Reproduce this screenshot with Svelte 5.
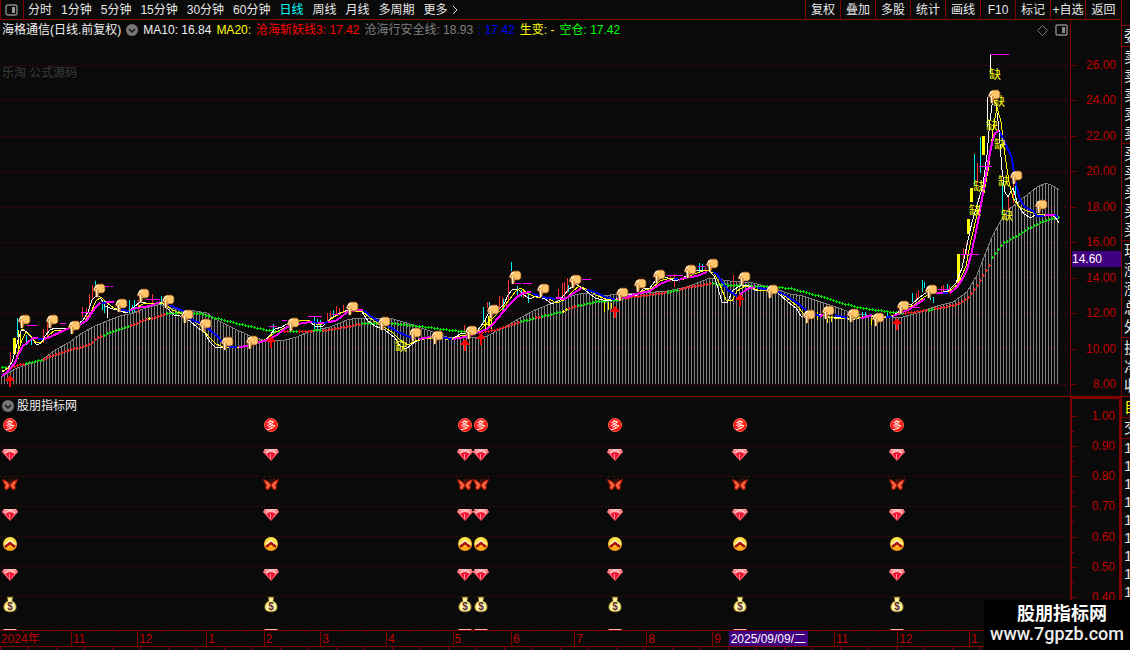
<script lang="ts">
	type Pt = [number, number];

	let period = $state('日线');

	const periods = ['分时', '1分钟', '5分钟', '15分钟', '30分钟', '60分钟', '日线', '周线', '月线', '多周期'];
	const tools = ['复权', '叠加', '多股', '统计', '画线', 'F10', '标记', '+自选', '返回'];

	const legend = [
		{ text: 'MA10: 16.84', cls: 'white' },
		{ text: 'MA20:', cls: 'yellow' },
		{ text: '沧海斩妖线3: 17.42', cls: 'red' },
		{ text: '沧海行安全线: 18.93', cls: 'gray' },
		{ text: ': 17.42', cls: 'blue' },
		{ text: '生变: -', cls: 'yellow' },
		{ text: '空仓: 17.42', cls: 'green' }
	];

	const prices = ['26.00', '24.00', '22.00', '20.00', '18.00', '16.00', '14.00', '12.00', '10.00', '8.00'];
	const levels = ['1.00', '0.90', '0.80', '0.70', '0.60', '0.50', '0.40'];

	const months = [
		{ name: '2024年', span: 72 },
		{ name: '11', span: 66 },
		{ name: '12', span: 69 },
		{ name: '1', span: 57 },
		{ name: '2', span: 56 },
		{ name: '3', span: 66 },
		{ name: '4', span: 66 },
		{ name: '5', span: 58 },
		{ name: '6', span: 63 },
		{ name: '7', span: 72 },
		{ name: '8', span: 66 },
		{ name: '9', span: 59 },
		{ name: '', span: 62 },
		{ name: '11', span: 63 },
		{ name: '12', span: 72 },
		{ name: '1', span: 154 }
	];

	const sideGroups = [
		{ rows: ['委'] },
		{ rows: ['卖', '卖', '卖', '卖', '卖'] },
		{ rows: ['买', '买', '买', '买', '买'] },
		{ rows: ['现', '涨', '涨', '总', '外'] },
		{ rows: ['换', '净', '收'] },
		{ rows: ['自'], cls: 'yellow' },
		{ rows: ['交'] },
		{ rows: ['1', '1', '1', '1', '1', '1', '1', '1', '1'], cls: 'ticks' }
	];

	function parse(s: string): Pt[] {
		return s.split(' ').map((p) => p.split(',').map(Number) as Pt);
	}

	function valueAt(pts: Pt[], x: number) {
		for (let i = 1; i < pts.length; i++) {
			if (x <= pts[i][0]) {
				const [x0, y0] = pts[i - 1];
				const [x1, y1] = pts[i];
				return y0 + ((y1 - y0) * (x - x0)) / (x1 - x0);
			}
		}
		return pts[pts.length - 1][1];
	}

	const safety = parse('1,377 15,369 25,365 42,360 55,350 70,342 82,333 95,326 107,321 120,316 133,313 143,309 160,304 167,307 180,310 195,311 207,313 217,320 233,328 250,336 263,340 285,340 297,337 310,331 330,327 347,320 357,318 370,318 393,319 410,324 427,330 447,337 473,338 487,336 503,328 520,318 533,311 550,304 567,297 583,293 603,296 617,294 643,293 667,291 687,287 710,278 730,281 753,283 773,288 790,294 803,296 830,305 853,313 880,317 903,317 917,313 937,306 953,302 967,292 977,275 984,257 992,237 1000,222 1008,210 1017,203 1027,195 1037,187 1046,183 1053,186 1059,190');

	const bars: { x: number; y: number }[] = [];
	for (let x = 1; x < 1060; x += 3) {
		bars.push({ x, y: Math.round(valueAt(safety, x)) });
	}

	const cross = parse('2,367 10,367 17,365 25,363 40,360 67,350 87,345 100,336 130,325 147,319 167,313 185,312 200,313 213,317 240,324 267,330 278,331 300,331 323,330 337,328 363,323 393,323 427,327 460,331 480,332 493,330 517,322 533,318 542,316 562,311 575,306 597,301 617,300 628,297 667,292 687,287 710,283 733,285 767,286 790,288 820,296 853,306 877,310 903,313 910,312 927,310 957,304 967,298 977,285 983,275 988,267 993,255 1003,243 1017,235 1030,227 1043,221 1053,218 1060,217');
	const redRuns = [[8, 24], [42, 102], [131, 146], [152, 166], [279, 289], [297, 313], [322, 361], [479, 519], [534, 541], [568, 575], [624, 665], [680, 711], [905, 927], [934, 990]];
	const yellowRuns = [[72, 75], [147, 152], [562, 568]];

	function crossColor(x: number) {
		if (redRuns.some(([a, b]) => x >= a && x <= b)) return '#ff1c1c';
		if (yellowRuns.some(([a, b]) => x >= a && x <= b)) return '#ffff00';
		return '#00e000';
	}

	const crosses: { x: number; y: number; color: string }[] = [];
	for (let x = 2; x <= 1060; x += 3) {
		crosses.push({ x, y: Math.round(valueAt(cross, x)), color: crossColor(x) });
	}

	const rising = [
		'2,376 8,371 15,363 18,355 23,346 28,342 33,338 38,338',
		'44,339 50,337 67,329 80,325 87,320 95,308 100,303',
		'106,302 114,302',
		'130,310 137,308 150,306 160,302',
		'239,347 247,346 260,342 267,340 277,335 287,327 295,325 303,323 312,322',
		'318,323 324,323',
		'328,322 335,321 340,318 347,312 357,310 363,310',
		'419,339 430,337',
		'453,339 465,337 477,333 487,329 493,324 503,312 510,304 517,297 523,293 531,292',
		'556,298 565,299 572,294 582,288',
		'617,299 627,297 640,293 650,291 660,284 670,280',
		'679,280 684,278 697,276 707,272',
		'740,295 747,289 755,287',
		'820,316 823,315',
		'861,318 866,317 872,315',
		'893,316 898,314 910,309 917,304 925,299',
		'934,293 943,293',
		'950,293 957,287 963,278 967,270 971,255 977,227 983,193 988,163 992,143 995,133 999,131',
		'1045,215 1055,215'
	];
	const falling = [
		'38,339 43,339',
		'102,303 106,303',
		'121,310 129,311',
		'169,305 174,307 183,311 192,320 200,323 210,330 218,337 222,342 230,347 237,347',
		'312,322 318,323',
		'324,323 328,322',
		'364,311 373,318 390,327 398,332 407,336 415,339',
		'443,338 452,339',
		'533,294 537,295 542,297 555,299',
		'587,290 597,293 607,298 615,299',
		'674,279 678,279',
		'713,272 717,274 722,282 728,290 737,296',
		'758,288 765,289 777,291 787,296 800,305 808,312 820,316',
		'835,315 847,318',
		'886,317 892,317',
		'943,293 948,293',
		'1000,132 1005,143 1012,158 1015,180 1020,200 1025,207 1033,211 1037,216 1044,216',
		'1055,215 1058,218'
	];

	const ma10 = '2,372 8,368 12,362 15,352 18,340 21,331 24,330 28,333 33,340 37,345 41,343 45,336 50,330 55,328 62,329 70,328 78,324 83,320 88,312 92,300 96,296 100,297 105,306 110,308 120,311 126,313 133,308 140,302 146,303 155,304 162,302 168,309 174,315 180,316 190,321 198,328 205,333 210,342 215,347 222,347 235,348 244,346 255,343 265,341 270,335 275,329 282,327 292,321 300,320 308,320 315,326 322,327 330,319 338,314 345,311 355,310 362,312 368,321 375,326 385,330 395,338 400,346 406,349 412,344 420,339 430,338 440,337 448,340 455,337 462,333 470,335 478,330 484,322 490,310 496,312 504,304 508,295 512,290 518,289 524,295 530,299 536,296 545,299 552,304 560,300 568,290 576,284 585,290 595,298 603,300 612,300 620,298 630,294 636,296 643,289 650,288 655,281 665,277 675,281 683,278 692,272 700,270 708,270 714,276 718,288 722,302 727,303 733,290 740,286 748,285 756,291 768,290 778,293 788,302 796,308 801,316 808,318 818,314 830,318 840,317 852,320 862,317 872,315 882,318 892,317 898,312 904,307 912,304 920,297 930,290 938,293 948,291 956,283 962,268 967,245 972,222 978,202 983,185 987,155 990,120 993,98 996,104 999,130 1002,170 1005,192 1008,197 1013,188 1018,205 1024,214 1031,218 1036,214 1042,216 1050,214 1055,217 1059,223';
	const ma20 = '2,371 10,368 15,362 18,352 22,340 26,332 31,336 36,343 42,342 48,336 55,330 66,330 76,327 85,321 91,312 96,301 101,297 107,303 114,308 126,312 136,308 145,303 158,303 164,303 172,310 180,313 190,319 200,325 208,336 216,344 226,348 242,347 256,343 267,339 274,333 282,329 292,324 302,320 310,321 318,325 326,323 334,317 343,312 352,311 362,311 370,318 380,325 392,332 400,340 408,345 415,341 424,339 440,338 450,340 460,336 472,334 480,330 486,324 494,317 502,309 509,300 516,291 521,288 528,294 536,297 546,297 556,303 564,300 572,292 579,286 588,290 598,296 608,300 620,299 632,296 642,291 652,288 660,281 670,278 682,280 694,274 706,270 714,273 720,285 726,300 732,301 737,291 745,286 758,290 770,290 780,293 790,300 798,307 806,317 820,315 834,318 846,319 858,318 872,316 886,317 896,315 904,309 914,305 924,297 934,292 948,292 958,284 966,266 971,240 977,215 984,193 989,165 993,130 997,107 1001,122 1005,155 1009,182 1013,198 1019,207 1027,211 1036,214 1046,214 1058,217';

	const redWicks = [[10, 352, 363], [43, 329, 343], [47, 322, 336], [82, 307, 317], [86, 308, 318], [89, 294, 310], [92, 285, 300], [138, 300, 313], [152, 294, 305], [288, 320, 328], [327, 313, 323], [330, 311, 320], [336, 306, 315], [339, 308, 315], [343, 305, 313], [464, 325, 331], [487, 302, 308], [499, 296, 310], [502, 297, 313], [506, 303, 310], [508, 280, 302], [523, 290, 298], [549, 297, 303], [558, 289, 298], [562, 283, 298], [564, 282, 297], [567, 278, 293], [670, 275, 282], [674, 274, 287], [705, 267, 273], [733, 275, 285], [916, 293, 300], [918, 290, 298], [941, 286, 292], [943, 285, 293], [949, 286, 293], [957, 275, 285], [963, 248, 260], [966, 243, 255], [977, 163, 183], [1008, 197, 210], [1013, 183, 203]];
	const cyanWicks = [[17, 318, 337], [26, 335, 345], [31, 338, 345], [95, 281, 285], [102, 300, 310], [104, 300, 313], [129, 300, 313], [132, 305, 313], [134, 300, 312], [161, 296, 305], [273, 324, 333], [314, 317, 330], [317, 319, 332], [320, 320, 330], [333, 310, 318], [483, 307, 322], [489, 302, 310], [503, 299, 312], [511, 262, 271], [517, 286, 297], [521, 290, 297], [528, 293, 303], [568, 285, 292], [699, 263, 272], [702, 264, 270], [862, 312, 317], [865, 312, 317], [887, 312, 317], [912, 293, 302], [922, 280, 292], [924, 282, 288], [930, 293, 300], [933, 297, 303], [947, 284, 293], [974, 154, 185], [980, 137, 173], [1002, 183, 215], [1015, 183, 200]];
	const whiteWicks = [[107, 305, 318], [990, 54, 73], [987, 97, 127]];
	// limit-up candles and the choppy stretches, drawn solid
	const blocks = [[13, 338, 3, 16], [18, 330, 1, 20], [21, 329, 3, 1], [20, 334, 1, 12], [16, 358, 3, 1], [485, 318, 1, 12], [488, 316, 2, 10], [491, 317, 1, 14], [481, 324, 12, 1], [604, 302, 1, 10], [608, 302, 1, 8], [611, 303, 1, 6], [817, 312, 1, 8], [827, 317, 1, 6], [831, 316, 1, 6], [871, 318, 1, 7], [957, 254, 3, 28], [967, 219, 3, 15], [970, 188, 3, 14], [982, 136, 3, 19]];
	const marks = [[27, 37, 325], [60, 66, 323], [105, 109, 286], [111, 113, 286], [81, 92, 312], [146, 160, 299], [269, 277, 326], [282, 287, 320], [308, 322, 316], [332, 340, 314], [515, 521, 283], [523, 532, 283], [582, 591, 279], [667, 683, 275], [698, 705, 266], [910, 920, 307], [938, 950, 289], [961, 979, 254], [979, 992, 166], [990, 1009, 54]];

	const hands = parse('24,321 52,321 74,327 99,290 121,305 143,295 168,301 187,316 205,325 227,343 252,342 293,324 352,308 384,323 415,334 437,337 471,332 493,311 515,277 543,290 575,281 622,294 640,285 659,276 690,271 712,265 744,278 772,291 809,316 828,312 853,315 878,319 903,307 931,291 994,96 1016,177 1041,206');
	const arrows = parse('10,375 271,336 465,339 481,333 615,306 740,294 897,318');
	const gaps = parse('401,351 995,79 999,106 992,130 1000,149 979,191 975,215 1004,186 1007,220');

	const signals = [10, 271, 465, 481, 615, 740, 897];
	const stack = [
		{ icon: 'duo', y: 28 },
		{ icon: 'gem', y: 57 },
		{ icon: 'butterfly', y: 87 },
		{ icon: 'gem', y: 117 },
		{ icon: 'up', y: 147 },
		{ icon: 'gem', y: 177 },
		{ icon: 'bag', y: 208 },
		{ icon: 'gem', y: 237 }
	];

	function wicks(list: number[][]) {
		return list.map(([x, a, b]) => `M${x + 0.5} ${a}V${b}`).join('');
	}
</script>

<div class="terminal">
	<div class="main">
		<nav class="toolbar">
			<button class="layout-btn" aria-label="布局">
				<svg width="13" height="12" viewBox="0 0 13 12">
					<rect x="1" y="1" width="11" height="10" rx="2" fill="none" stroke="#888" stroke-width="1.4" />
					<rect x="7" y="3" width="3" height="6" fill="#999" />
				</svg>
			</button>
			<div class="periods">
				{#each periods as p}
					<button class:active={p === period} onclick={() => (period = p)}>{p}</button>
				{/each}
				<button class="more">更多
					<svg width="6" height="10" viewBox="0 0 6 10"><path d="M1 1L5 5L1 9" fill="none" stroke="#ddd" /></svg>
				</button>
			</div>
			<div class="tools">
				{#each tools as t}
					<button>{t}</button>
				{/each}
			</div>
		</nav>

		<section class="panel price">
			<div class="plot">
				<svg class="chart" viewBox="0 20 1070 376">
					<defs>
						<g id="hand">
							<path d="M-6 1L-4-4L-1-6H4L6-4V1L4 3H0L-1 7H-3L-4 1Z" fill="#ffc66c" stroke="#7a3c12" stroke-width=".8" stroke-linejoin="round" />
							<path d="M-5 0L-3-4L-1-5M-2.500 0V7" fill="none" stroke="#fff0d4" stroke-width="1.300" />
							<path d="M-4 0L-3-2M-1 0V5" fill="none" stroke="#a8581c" stroke-width=".8" />
						</g>
					</defs>

					{#each prices as _, i}
						<line class="grid" x1="1" x2="1067" y1={Math.round(65 + i * 35.4) + 0.5} y2={Math.round(65 + i * 35.4) + 0.5} />
					{/each}

					<path class="thin" stroke="#808080" d={bars.map((b) => `M${b.x + 0.5} ${b.y}V384`).join('')} />
					<polyline class="thin" stroke="#808080" points={safety.join(' ')} />

					<path class="thin" stroke="#ff3232" d={wicks(redWicks)} />
					<path class="thin" stroke="#00f0f0" d={wicks(cyanWicks)} />
					<path class="thin" stroke="#fff" d={wicks(whiteWicks)} />
					{#each blocks as [x, y, w, h]}
						<rect {x} {y} width={w} height={h} fill="#ffff00" />
					{/each}

					{#each crosses as c}
						<path class="thin" stroke={c.color} d="M{c.x - 1} {c.y + 0.5}h3M{c.x + 0.5} {c.y - 1}v3" />
					{/each}

					<polyline class="thin" stroke="#fff" points={ma10} />
					<polyline class="thin" stroke="#ffff00" points={ma20} />
					{#each rising as points}
						<polyline class="thick" stroke="#ff00ff" {points} />
					{/each}
					{#each falling as points}
						<polyline class="thick" stroke="#0000ff" {points} />
					{/each}
					{#each marks as [a, b, y]}
						<line class="thin" stroke="#ff00ff" x1={a} x2={b} y1={y + 0.5} y2={y + 0.5} />
					{/each}

					{#each gaps as [x, y]}
						<text class="gap" {x} {y}>缺</text>
					{/each}
					{#each arrows as [x, y]}
						<path d="M{x} {y}l5 6h-4v6h-2v-6h-4z" fill="#ff0000" />
					{/each}
					{#each hands as [x, y]}
						<use href="#hand" {x} {y} />
					{/each}
				</svg>

				<div class="legend">
					<span class="white">海格通信(日线.前复权)</span>
					<button class="fold" aria-label="展开指标">
						<svg width="12" height="12" viewBox="0 0 12 12"><circle cx="6" cy="6" r="6" fill="#777" /><path d="M3 5L6 8L9 5" fill="none" stroke="#111" stroke-width="1.4" /></svg>
					</button>
					{#each legend as l}
						<span class={l.cls}>{l.text}</span>
					{/each}
					<span class="corner">
						<svg width="11" height="11" viewBox="0 0 11 11"><path d="M5.5 .5L10.500 5.500L5.500 10.500L.5 5.500Z" fill="none" stroke="#777" /></svg>
						<svg width="13" height="12" viewBox="0 0 13 12">
							<rect x="1" y="1" width="11" height="10" rx="1" fill="none" stroke="#888" stroke-width="1.4" />
							<rect x="7" y="3" width="3" height="6" fill="#888" />
						</svg>
					</span>
				</div>
				<p class="source">乐淘 公式源码</p>
			</div>
			<ul class="axis">
				{#each prices as p}
					<li>{p}</li>
				{/each}
			</ul>
			<span class="price-tag">14.60</span>
		</section>

		<section class="panel signal">
			<div class="plot">
				<svg class="chart" viewBox="0 0 1070 233">
					<defs>
						<radialGradient id="redball" cx=".5" cy=".4">
							<stop offset=".5" stop-color="#ff2a20" />
							<stop offset="1" stop-color="#ff0000" />
						</radialGradient>
						<linearGradient id="gold" x2="0" y2="1">
							<stop offset="0" stop-color="#fff04a" />
							<stop offset="1" stop-color="#ff9a10" />
						</linearGradient>
						<g id="duo">
							<circle r="6.500" fill="url(#redball)" stroke="#ff6a5a" />
						</g>
						<g id="gem">
							<path d="M-8-2L-6-5H6L8-2L0 7Z" fill="#ff5a68" />
							<path d="M-8-2L-6-5H6L8-2L4 0C2-2-2-2-4 0Z" fill="#ff8088" />
							<path d="M-6-4.500H6" stroke="#ffb8b0" fill="none" />
							<path d="M-5-1C-3-4 3-4 5-1" stroke="#fff0e8" fill="none" />
							<path d="M-4 0C-2-2 2-2 4 0L0 6Z" fill="#f01434" />
							<path d="M-.5 0V5" stroke="#ffb0b0" stroke-width=".8" />
						</g>
						<g id="butterfly">
							<path d="M0 1C-1-2-4-4-8-5C-7-3-7-1-5 1C-6 3-6 5-4 6C-2 6-1 4 0 2C1 4 2 6 4 6C6 5 6 3 5 1C7-1 7-3 8-5C4-4 1-2 0 1Z" fill="#e03818" stroke="#6a0c04" stroke-width=".8" />
							<path d="M-5-2L-2 1L-4 4M5-2L2 1L4 4" fill="none" stroke="#ff7450" stroke-width="1.500" />
							<path d="M0 0L-1-5M0 0L3-6" stroke="#a01a10" stroke-width=".7" />
						</g>
						<g id="up">
							<circle r="7" fill="url(#gold)" />
							<path d="M-5 1L0-3L5 1" fill="none" stroke="#fff6b0" stroke-width="3" />
							<path d="M-5 3L0-1L5 3" fill="none" stroke="#a80c0c" stroke-width="2.400" />
						</g>
						<g id="bag">
							<path d="M-3-8H3L2-4C5-3 7 0 6 4C5 8-5 8-6 4C-7 0-5-3-2-4Z" fill="#f5ee6a" stroke="#6e4a2a" stroke-width=".8" />
							<ellipse cy="2" rx="4.500" ry="4" fill="#fff9c4" />
							<path d="M-2-5H2" stroke="#fff" />
						</g>
					</defs>

					{#each levels.slice(1) as _, i}
						<line class="grid" x1="1" x2="1067" y1={49.5 + i * 30} y2={49.5 + i * 30} />
					{/each}
					{#each signals as x}
						{#each stack as s}
							<use href="#{s.icon}" {x} y={s.y} />
							{#if s.icon === 'duo'}
								<text class="duo" {x} y={s.y + 4}>多</text>
							{:else if s.icon === 'bag'}
								<text class="dollar" {x} y={s.y + 5}>$</text>
							{/if}
						{/each}
					{/each}
				</svg>
				<div class="legend">
					<button class="fold" aria-label="展开副图">
						<svg width="12" height="12" viewBox="0 0 12 12"><circle cx="6" cy="6" r="6" fill="#777" /><path d="M3 5L6 8L9 5" fill="none" stroke="#111" stroke-width="1.4" /></svg>
					</button>
					<span class="white">股朋指标网</span>
				</div>
			</div>
			<ul class="axis">
				{#each levels as l}
					<li>{l}</li>
				{/each}
			</ul>
		</section>

		<div class="timeline">
			{#each months as m}
				<span style:flex-grow={m.span}>{m.name}</span>
			{/each}
			<time class="cursor" datetime="2025-09-09">2025/09/09/二</time>
		</div>
		<div class="status"></div>
	</div>

	<aside class="quotes">
		{#each sideGroups as g}
			<div class="group {g.cls ?? ''}">
				{#each g.rows as r}
					<span>{r}</span>
				{/each}
			</div>
		{/each}
	</aside>

	<footer class="brand">
		<strong>股朋指标网</strong>
		<a href="http://www.7gpzb.com">www.7gpzb.com</a>
	</footer>
</div>

<style>
	:global(body) {
		background: #0a0a0a;
	}

	.terminal {
		position: relative;
		display: flex;
		height: 100vh;
		overflow: hidden;
		background: #0a0a0a;
		color: #e8e8e8;
		font: 12px/16px 'Liberation Sans', 'Noto Sans CJK SC', sans-serif;
	}

	.main {
		flex: 1;
		min-width: 0;
		display: flex;
		flex-direction: column;
	}

	button {
		padding: 0;
		border: 0;
		background: none;
		color: inherit;
		font: inherit;
		white-space: nowrap;
		cursor: pointer;
	}

	svg {
		display: block;
	}

	.toolbar {
		display: flex;
		height: 19px;
		border-bottom: 1px solid #800000;
	}

	.layout-btn {
		width: 24px;
		box-sizing: border-box;
		padding-left: 4px;
		border-left: 1px solid #800000;
		border-right: 1px solid #800000;
	}

	.periods {
		flex: 1;
		display: flex;
		gap: 9px;
		padding-left: 4px;
	}

	.periods .active {
		color: #00ffff;
	}

	.more {
		display: flex;
		align-items: center;
		gap: 4px;
	}

	.tools {
		display: flex;
	}

	.tools button {
		width: 35px;
		border-left: 1px solid #800000;
		box-sizing: border-box;
	}

	.tools button:last-child {
		width: 36px;
	}

	.panel {
		position: relative;
		display: flex;
	}

	.plot {
		position: relative;
		flex: 1;
		min-width: 0;
	}

	.chart {
		width: 100%;
		height: auto;
	}

	.price {
		border-bottom: 1px solid #800000;
	}

	.legend {
		position: absolute;
		top: 2px;
		left: 2px;
		right: 2px;
		display: flex;
		align-items: center;
		gap: 5px;
		white-space: pre;
	}

	.signal .legend {
		top: 1px;
		gap: 3px;
	}

	.corner {
		display: flex;
		align-items: center;
		gap: 7px;
		margin-left: auto;
	}

	.source {
		position: absolute;
		top: 45px;
		left: 2px;
		margin: 0;
		color: #3c3c3c;
	}

	.white { color: #f0f0f0; }
	.yellow { color: #ffff00; }
	.red { color: #ff0000; }
	.gray { color: #808080; }
	.blue { color: #0000ff; }
	.green { color: #00ff00; }

	.axis {
		width: 51px;
		box-sizing: border-box;
		display: flex;
		flex-direction: column;
		justify-content: space-between;
		margin: 0;
		padding: 37px 0 4px;
		border-left: 1px solid #800000;
		list-style: none;
		color: #c00000;
	}

	.axis li {
		position: relative;
		padding-right: 5px;
		text-align: right;
	}

	.axis li::before,
	.axis li::after {
		content: '';
		position: absolute;
		left: 0;
		top: 8px;
		width: 5px;
		height: 1px;
		background: #800000;
	}

	.axis li::after {
		top: 26px;
		width: 2px;
	}

	.axis li:last-child::after {
		display: none;
	}

	.signal .axis {
		padding: 9px 0 25px;
		border: 2px solid #800000;
		border-bottom: 0;
	}

	.signal .axis li {
		padding-right: 4px;
	}

	.signal .axis li::after {
		top: 23px;
	}

	.price-tag {
		position: absolute;
		right: 0;
		bottom: 129px;
		width: 49px;
		background: #400080;
		color: #fff;
	}

	.grid {
		stroke: #6a0c0c;
		stroke-dasharray: 1 3;
		shape-rendering: crispEdges;
	}

	.thin {
		fill: none;
		stroke-width: 1;
		shape-rendering: crispEdges;
	}

	.thick {
		fill: none;
		stroke-width: 2;
		shape-rendering: crispEdges;
	}

	.gap {
		fill: #ffff00;
		font-size: 12px;
		text-anchor: middle;
	}

	.duo {
		fill: #fff;
		font-size: 10px;
		text-anchor: middle;
	}

	.dollar {
		fill: #5c2a2a;
		font-size: 10px;
		font-weight: 700;
		text-anchor: middle;
	}

	.timeline {
		position: relative;
		display: flex;
		height: 15px;
		border: solid #800000;
		border-width: 1px 0;
		color: #c00000;
	}

	.timeline span {
		flex-basis: 0;
		min-width: 0;
		box-sizing: border-box;
		padding-left: 1px;
		border-left: 1px solid #800000;
		white-space: nowrap;
		background: linear-gradient(#800000, #800000) 33% 0 / 1px 2px no-repeat, linear-gradient(#800000, #800000) 72% 0 / 1px 2px no-repeat;
	}

	.timeline span:first-child {
		border-left: 0;
	}

	.cursor {
		position: absolute;
		left: 65%;
		top: 0;
		height: 15px;
		padding: 0 2px;
		background: #400080;
		color: #fff;
	}

	.status {
		flex: 1;
		background: repeating-linear-gradient(90deg, #800000 0 1px, transparent 1px 28px);
	}

	.quotes {
		width: 9px;
		box-sizing: border-box;
		padding-top: 25px;
		border-left: 1px solid #800000;
		overflow: hidden;
		font-size: 15px;
	}

	.group {
		padding-bottom: 1px;
		border-top: 1px solid #800000;
	}

	.group span {
		display: block;
		height: 19px;
		padding-left: 2px;
		line-height: 19px;
		white-space: nowrap;
	}

	.group.ticks span {
		height: 18px;
		line-height: 18px;
	}

	.brand {
		position: absolute;
		right: 0;
		bottom: 0;
		width: 146px;
		height: 50px;
		box-sizing: border-box;
		padding-top: 4px;
		background: #000;
		color: #fff;
		text-align: center;
		font-size: 18px;
		line-height: 20px;
	}

	.brand strong,
	.brand a {
		display: block;
	}

	.brand strong {
		padding-left: 10px;
	}

	.brand a {
		color: #eee;
		font-family: Roboto, sans-serif;
		font-weight: 500;
		text-decoration: none;
	}
</style>
